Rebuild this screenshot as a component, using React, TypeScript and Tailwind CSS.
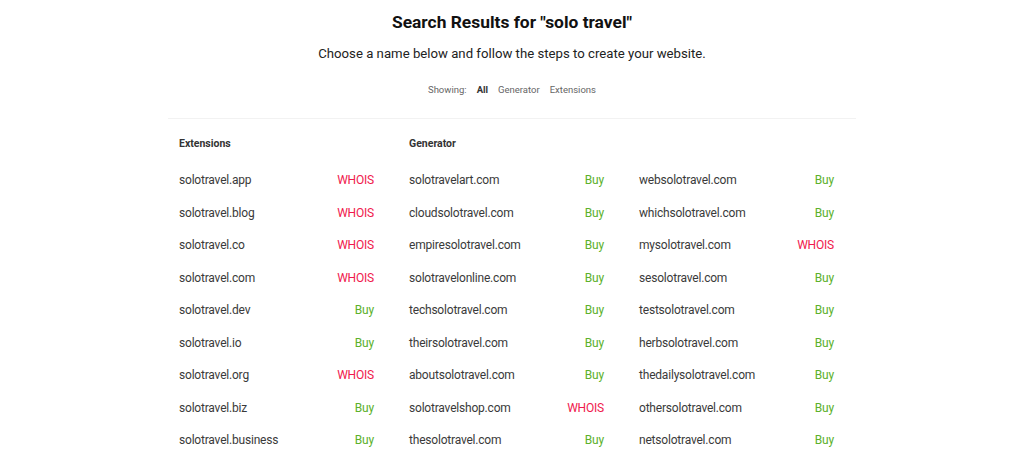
import React from "react";

type Row = [string, "WHOIS" | "Buy"];

const ext: Row[] = [
  ["solotravel.app", "WHOIS"],
  ["solotravel.blog", "WHOIS"],
  ["solotravel.co", "WHOIS"],
  ["solotravel.com", "WHOIS"],
  ["solotravel.dev", "Buy"],
  ["solotravel.io", "Buy"],
  ["solotravel.org", "WHOIS"],
  ["solotravel.biz", "Buy"],
  ["solotravel.business", "Buy"],
];

const gen1: Row[] = [
  ["solotravelart.com", "Buy"],
  ["cloudsolotravel.com", "Buy"],
  ["empiresolotravel.com", "Buy"],
  ["solotravelonline.com", "Buy"],
  ["techsolotravel.com", "Buy"],
  ["theirsolotravel.com", "Buy"],
  ["aboutsolotravel.com", "Buy"],
  ["solotravelshop.com", "WHOIS"],
  ["thesolotravel.com", "Buy"],
];

const gen2: Row[] = [
  ["websolotravel.com", "Buy"],
  ["whichsolotravel.com", "Buy"],
  ["mysolotravel.com", "WHOIS"],
  ["sesolotravel.com", "Buy"],
  ["testsolotravel.com", "Buy"],
  ["herbsolotravel.com", "Buy"],
  ["thedailysolotravel.com", "Buy"],
  ["othersolotravel.com", "Buy"],
  ["netsolotravel.com", "Buy"],
];

function Column({ title, rows }: { title: string; rows: Row[] }) {
  return (
    <div className="w-[195px]">
      <div className="h-[20px] flex items-center text-[10.5px] font-bold text-[#333]">{title || "\u00a0"}</div>
      <div className="mt-[10px]">
        {rows.map(([name, act]) => (
          <div key={name} className="h-[32.5px] flex items-center justify-between text-[12px] tracking-[-0.2px]">
            <span className="text-[#3a3a3a]">{name}</span>
            <span className={act === "WHOIS" ? "text-[#f0194d]" : "text-[#5bb02a]"}>{act}</span>
          </div>
        ))}
      </div>
    </div>
  );
}

export default function App() {
  return (
    <div className="w-[1024px] h-[463px] overflow-hidden bg-white" style={{ fontFamily: "Roboto, 'Liberation Sans', sans-serif" }}>
      <div className="flex flex-col items-center">
        <h1 className="mt-[10px] text-[17.4px] leading-[24px] font-bold text-[#111]">Search Results for "solo travel"</h1>
        <p className="mt-[10px] text-[13.2px] leading-[20px] text-[#222]">Choose a name below and follow the steps to create your website.</p>
        <div className="mt-[19px] flex items-center gap-[10px] text-[9.5px] leading-[14px] text-[#666]">
          <span>Showing:</span>
          <span className="font-bold text-[#333]">All</span>
          <span>Generator</span>
          <span>Extensions</span>
        </div>
      </div>
      <div className="mt-[21px] w-[688px] ml-[168px] border-t border-[#f2f2f2]">
        <div className="pl-[11px] pt-[15px] flex gap-[35px]">
          <Column title="Extensions" rows={ext} />
          <Column title="Generator" rows={gen1} />
          <Column title="" rows={gen2} />
        </div>
      </div>
    </div>
  );
}
